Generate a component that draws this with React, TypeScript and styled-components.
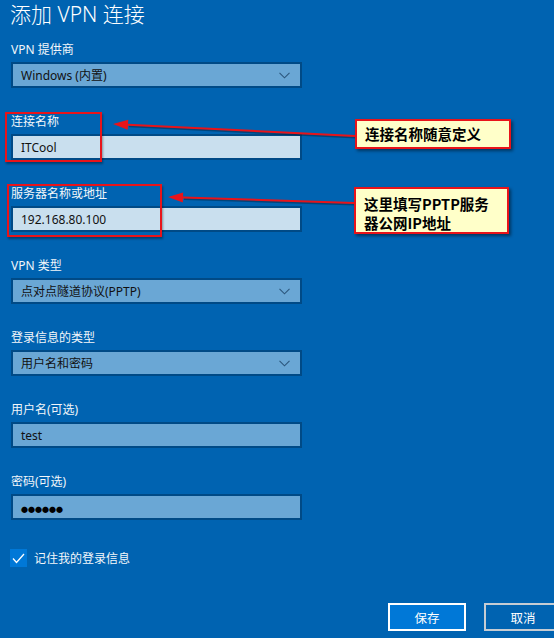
import React, { FC } from "react";
import styled, { createGlobalStyle } from "styled-components";

const GlobalStyle = createGlobalStyle`
  html, body {
    margin: 0;
    padding: 0;
    background: #0063b1;
    overflow: hidden;
  }
`;

const FONT = `"Segoe UI", "Noto Sans", "Noto Sans CJK SC", sans-serif`;

const Page = styled.div`
  position: relative;
  width: 554px;
  height: 638px;
  box-sizing: border-box;
  padding: 0 0 0 11px;
  background: #0063b1;
  font-family: ${FONT};
  color: #f2f6fa;
  overflow: hidden;
`;

const Title = styled.h1`
  margin: 0 0 13px -1px;
  font-size: 21px;
  line-height: 28px;
  font-weight: 300;
  color: #ffffff;
`;

const Group = styled.div<{ $last?: boolean }>`
  display: flex;
  flex-direction: column;
  gap: 3px;
  margin-bottom: ${({ $last }) => ($last ? "0" : "25px")};
`;

const Label = styled.div`
  font-size: 12px;
  line-height: 18px;
  height: 18px;
`;

const Field = styled.div<{ $light?: boolean }>`
  display: flex;
  align-items: center;
  justify-content: space-between;
  box-sizing: border-box;
  width: 291px;
  height: 26px;
  padding: 0 10px 0 8px;
  border: 2px solid #004a86;
  background: ${({ $light }) => ($light ? "#c9dfee" : "#6aa7d5")};
  color: #111;
  font-size: 12px;
`;

const Dots = styled.span`
  font-family: "Noto Sans CJK SC", sans-serif;
  font-size: 7px;
  color: #000;
`;

const CheckRow = styled.div`
  display: flex;
  align-items: center;
  gap: 7px;
  margin: 29px 0 0 -1px;
  font-size: 12px;
  height: 18px;
`;

const Box = styled.div`
  width: 17px;
  height: 18px;
  background: #0078d7;
  display: flex;
  align-items: center;
  justify-content: center;
`;

const Buttons = styled.div`
  display: flex;
  gap: 18px;
  margin: 36px 0 0 377px;
`;

const Button = styled.div<{ $primary?: boolean }>`
  flex: none;
  box-sizing: border-box;
  width: 78px;
  height: 28px;
  display: flex;
  align-items: center;
  justify-content: center;
  font-size: 12.5px;
  color: #fff;
  background: ${({ $primary }) => ($primary ? "#0078d7" : "#0063b1")};
  border: 2px solid ${({ $primary }) => ($primary ? "#ffffff" : "#c6ccd3")};
`;

const RedFrame = styled.div`
  position: absolute;
  border: 2px solid #e8141a;
  box-shadow: 1px 2px 2px rgba(0, 0, 0, 0.35);
  box-sizing: border-box;
`;

const Callout = styled.div`
  position: absolute;
  box-sizing: border-box;
  background: #ffffc9;
  border: 2px solid #e8141a;
  box-shadow: 2px 2px 3px rgba(0, 0, 0, 0.45);
  padding: 4px 8px;
  font-family: "Noto Sans CJK SC", "Noto Sans", sans-serif;
  font-weight: 700;
  font-size: 14.5px;
  line-height: 19px;
  color: #000;
`;

const Overlay = styled.svg`
  position: absolute;
  left: 0;
  top: 0;
  pointer-events: none;
`;

const Chevron: FC = () => (
  <svg width="11" height="7" viewBox="0 0 11 7">
    <polyline points="0.5,0.8 5.5,5.8 10.5,0.8" fill="none" stroke="#2c577d" strokeWidth="1.1" />
  </svg>
);

const Arrow: FC<{ x1: number; y1: number; x2: number; y2: number }> = ({ x1, y1, x2, y2 }) => {
  const a = Math.atan2(y1 - y2, x1 - x2);
  const len = 15;
  const w = 5;
  const bx = x2 + Math.cos(a) * len;
  const by = y2 + Math.sin(a) * len;
  const px = -Math.sin(a) * w;
  const py = Math.cos(a) * w;
  return (
    <g>
      <line x1={x1 + 1} y1={y1 + 1.5} x2={bx + 1} y2={by + 1.5} stroke="rgba(0,0,0,0.3)" strokeWidth="2" />
      <line x1={x1} y1={y1} x2={bx} y2={by} stroke="#e8141a" strokeWidth="2" />
      <polygon points={`${x2},${y2} ${bx + px},${by + py} ${bx - px},${by - py}`} fill="#e8141a" />
    </g>
  );
};

const fields: { label: string; value: React.ReactNode; select?: boolean; light?: boolean }[] = [
  { label: "VPN 提供商", value: "Windows (内置)", select: true },
  { label: "连接名称", value: "ITCool", light: true },
  { label: "服务器名称或地址", value: "192.168.80.100", light: true },
  { label: "VPN 类型", value: "点对点隧道协议(PPTP)", select: true },
  { label: "登录信息的类型", value: "用户名和密码", select: true },
  { label: "用户名(可选)", value: "test" },
  { label: "密码(可选)", value: <Dots>●●●●●●</Dots> },
];

const App: FC = () => {
  return (
    <Page>
      <GlobalStyle />
      <Title>添加 VPN 连接</Title>
      {fields.map((f, i) => (
        <Group key={f.label} $last={i === fields.length - 1}>
          <Label>{f.label}</Label>
          <Field $light={f.light}>
            <span>{f.value}</span>
            {f.select && <Chevron />}
          </Field>
        </Group>
      ))}
      <CheckRow>
        <Box>
          <svg width="13" height="11" viewBox="0 0 13 11">
            <polyline points="1,5.5 4.5,9.5 12,1" fill="none" stroke="#fff" strokeWidth="1.3" />
          </svg>
        </Box>
        <span>记住我的登录信息</span>
      </CheckRow>
      <Buttons>
        <Button $primary>保存</Button>
        <Button>取消</Button>
      </Buttons>

      <RedFrame style={{ left: 5, top: 112, width: 97, height: 50 }} />
      <RedFrame style={{ left: 7, top: 184, width: 155, height: 53 }} />
      <Overlay width="554" height="638">
        <Arrow x1={355} y1={136} x2={113} y2={124} />
        <Arrow x1={354} y1={203} x2={168} y2={197} />
      </Overlay>
      <Callout style={{ left: 355, top: 119, width: 156, height: 30, paddingTop: 3 }}>
        连接名称随意定义
      </Callout>
      <Callout style={{ left: 354, top: 187, width: 155, height: 47, paddingTop: 5 }}>
        这里填写PPTP服务
        <br />
        器公网IP地址
      </Callout>
    </Page>
  );
};

export default App;
